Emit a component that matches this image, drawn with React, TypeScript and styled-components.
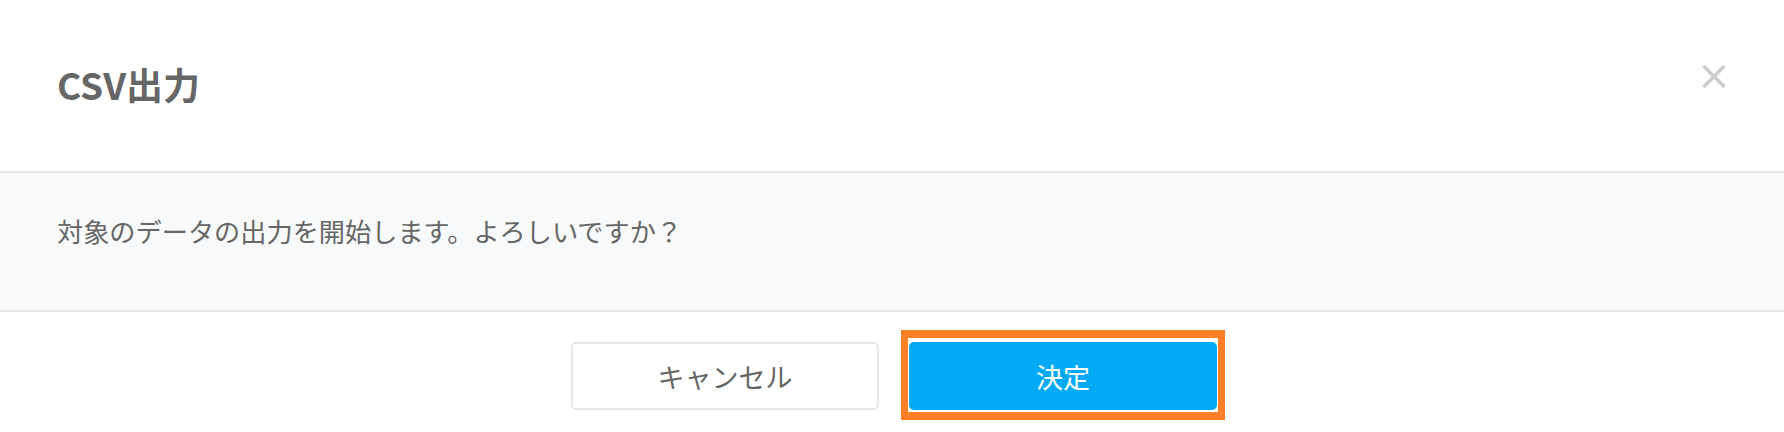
import React from "react";
import styled, { createGlobalStyle } from "styled-components";

const GlobalStyle = createGlobalStyle`
  html, body {
    margin: 0;
    padding: 0;
    background: #ffffff;
  }
  body {
    font-family: "Noto Sans CJK JP", "Noto Sans", sans-serif;
    color: #666666;
  }
  * { box-sizing: border-box; }
`;

const Dialog = styled.div`
  width: 1784px;
  height: 432px;
  display: flex;
  flex-direction: column;
  background: #ffffff;
  overflow: hidden;
`;

const Header = styled.header`
  flex: none;
  height: 173px;
  display: flex;
  align-items: center;
  justify-content: space-between;
  padding: 0 57px;
  border-bottom: 2px solid #e6e6e6;
`;

const Title = styled.h2`
  margin: 0;
  margin-top: -3px;
  font-size: 37px;
  line-height: 1;
  font-weight: 700;
  color: #666666;
  letter-spacing: 0;
`;

const CloseButton = styled.button`
  align-self: flex-start;
  margin-top: 64px;
  width: 26px;
  height: 25px;
  padding: 0;
  border: none;
  background: transparent;
  display: flex;
  align-items: center;
  justify-content: center;
  cursor: pointer;
`;

const Body = styled.div`
  flex: none;
  height: 139px;
  background: #f8f9fa;
  padding: 40px 57px 0;
  border-bottom: 2px solid #e6e6e6;
`;

const Message = styled.p`
  margin: 0;
  font-size: 26.2px;
  line-height: 36px;
  font-weight: 400;
  color: #666666;
`;

const Footer = styled.footer`
  flex: 1 1 auto;
  display: flex;
  justify-content: center;
  align-items: flex-start;
  gap: 30px;
  padding: 30px 0 0 4px;
`;

const Button = styled.button<{ $primary?: boolean }>`
  width: 308px;
  height: 68px;
  border-radius: 5px;
  font-family: "Noto Sans CJK JP", "Noto Sans", sans-serif;
  font-size: 27px;
  font-weight: 400;
  cursor: pointer;
  display: flex;
  align-items: center;
  justify-content: center;
  padding: 0;
  background: ${(p) => (p.$primary ? "#04aaf5" : "#ffffff")};
  color: ${(p) => (p.$primary ? "#ffffff" : "#666666")};
  border: ${(p) => (p.$primary ? "none" : "2px solid #e4e8ec")};
`;

const Highlighted = styled.div`
  position: relative;
  display: flex;

  &::after {
    content: "";
    position: absolute;
    top: -12px;
    bottom: -10px;
    left: -8px;
    right: -8px;
    border-style: solid;
    border-color: #fd7f26;
    border-width: 8px 7px;
    pointer-events: none;
  }
`;

const CloseIcon = () => (
  <svg width="26" height="25" viewBox="0 0 26 25" aria-hidden="true">
    <path
      d="M2.5 2 L23.5 23 M23.5 2 L2.5 23"
      stroke="#cccccc"
      strokeWidth="3.6"
      fill="none"
    />
  </svg>
);

export default function App() {
  return (
    <>
      <GlobalStyle />
      <Dialog>
        <Header>
          <Title>CSV出力</Title>
          <CloseButton aria-label="閉じる">
            <CloseIcon />
          </CloseButton>
        </Header>
        <Body>
          <Message>対象のデータの出力を開始します。よろしいですか？</Message>
        </Body>
        <Footer>
          <Button>キャンセル</Button>
          <Highlighted>
            <Button $primary>決定</Button>
          </Highlighted>
        </Footer>
      </Dialog>
    </>
  );
}
